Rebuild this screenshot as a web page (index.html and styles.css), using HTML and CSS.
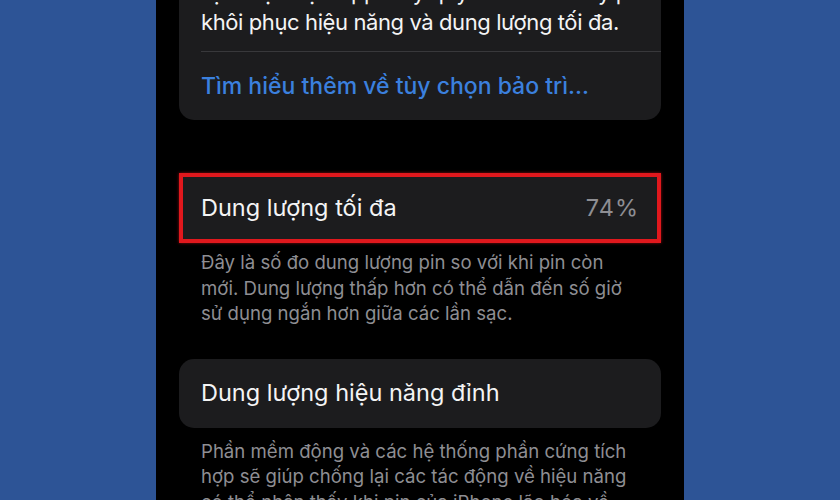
FILE: index.html
```html
<!DOCTYPE html>
<html lang="vi">
<head>
<meta charset="utf-8">
<title>Tình trạng pin</title>
<link rel="stylesheet" href="styles.css">
</head>
<body>
<div class="phone">
  <section class="card card-top">
    <p class="card-text">dịch vụ được Apple ủy quyền có thể thay pin để<br>khôi phục hiệu năng và dung lượng tối đa.</p>
    <div class="sep"></div>
    <p class="link">Tìm hiểu thêm về tùy chọn bảo trì...</p>
  </section>

  <section class="row-card highlight">
    <span class="row-title">Dung lượng tối đa</span>
    <span class="row-value">74%</span>
  </section>
  <p class="desc desc-first">Đây là số đo dung lượng pin so với khi pin còn<br>mới. Dung lượng thấp hơn có thể dẫn đến số giờ<br>sử dụng ngắn hơn giữa các lần sạc.</p>

  <section class="row-card plain">
    <span class="row-title">Dung lượng hiệu năng đỉnh</span>
  </section>
  <p class="desc desc-second">Phần mềm động và các hệ thống phần cứng tích<br>hợp sẽ giúp chống lại các tác động về hiệu năng<br>có thể nhận thấy khi pin của iPhone lão hóa về</p>
</div>
</body>
</html>
```

FILE: styles.css
```css
html, body {
  margin: 0;
  padding: 0;
}
body {
  background: #2d5496;
  height: 500px;
  overflow: hidden;
  font-family: Inter, "Noto Sans", "DejaVu Sans", sans-serif;
  -webkit-font-smoothing: antialiased;
}
.phone {
  width: 528px;
  height: 500px;
  margin: 0 auto;
  background: #000;
  padding: 0 23px;
  box-sizing: border-box;
  overflow: hidden;
}
.card {
  background: #1c1c1e;
  border-radius: 15px;
}
.card-top {
  margin-top: -33px;
  padding: 10px 0 21px 22px;
  overflow: hidden;
}
.card-text {
  margin: 0;
  color: #f4f4f5;
  font-size: 22px;
  letter-spacing: -0.4px;
  line-height: 30px;
  white-space: nowrap;
}
.sep {
  height: 1px;
  background: #38383b;
  margin-top: 14px;
}
.link {
  margin: 21px 0 0;
  color: #3b80de;
  font-size: 23px;
  font-weight: 500;
  line-height: 26px;
  white-space: nowrap;
}
.row-card {
  display: flex;
  align-items: center;
  justify-content: space-between;
  background: #1c1c1e;
  box-sizing: border-box;
}
.highlight {
  margin-top: 53px;
  height: 70px;
  border: 4px solid #e0181d;
  box-shadow: 0 0 3px rgba(224, 24, 29, 0.6);
  padding: 0 18px 0 18px;
}
.plain {
  margin-top: 32px;
  height: 69px;
  border-radius: 15px;
  padding: 0 22px;
}
.row-title {
  color: #f4f4f5;
  font-size: 23.5px;
  line-height: 28px;
}
.row-value {
  color: #8e8e93;
  font-size: 23.5px;
  letter-spacing: 1px;
  line-height: 28px;
}
.desc {
  color: #8e8e93;
  font-size: 18.6px;
  line-height: 25.5px;
  padding-left: 22px;
  white-space: nowrap;
  margin: 0;
}
.desc-first {
  margin-top: 7px;
}
.desc-second {
  margin-top: 11px;
}
```
